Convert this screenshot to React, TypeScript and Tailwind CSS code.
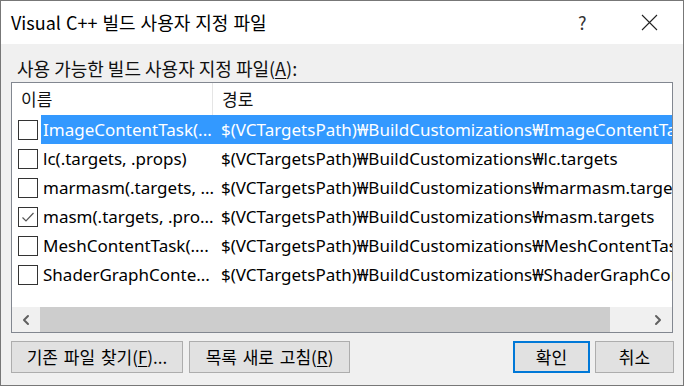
import { ChevronLeft, ChevronRight } from "lucide-react";

const rows = [
  { name: "ImageContentTask(...", path: "$(VCTargetsPath)₩BuildCustomizations₩ImageContentTask.targets", checked: false, selected: true },
  { name: "lc(.targets, .props)", path: "$(VCTargetsPath)₩BuildCustomizations₩lc.targets", checked: false },
  { name: "marmasm(.targets, ...", path: "$(VCTargetsPath)₩BuildCustomizations₩marmasm.targets", checked: false },
  { name: "masm(.targets, .pro...", path: "$(VCTargetsPath)₩BuildCustomizations₩masm.targets", checked: true },
  { name: "MeshContentTask(....", path: "$(VCTargetsPath)₩BuildCustomizations₩MeshContentTask.targets", checked: false },
  { name: "ShaderGraphConte...", path: "$(VCTargetsPath)₩BuildCustomizations₩ShaderGraphContentTask.targets", checked: false },
];

const ko = "font-['Noto_Sans_CJK_KR',sans-serif]";
const latin = "font-['Noto_Sans','Noto_Sans_CJK_KR',sans-serif]";

const CheckBox = ({ checked }: { checked: boolean }) => (
  <div className="flex h-[20px] w-[20px] shrink-0 items-center justify-center border border-[#333] bg-white">
    {checked && (
      <svg width="14" height="14" viewBox="0 0 14 14" fill="none">
        <path d="M1.5 7.5 L5 11 L12.5 3" stroke="#555" strokeWidth="1.2" />
      </svg>
    )}
  </div>
);

export default function App() {
  return (
    <div className={`flex h-[386px] w-[684px] flex-col overflow-hidden border border-[#777] bg-[#f0f0f0] ${ko}`}>
      {/* Title bar */}
      <div className="flex h-[43px] shrink-0 items-center bg-white pl-[10px] text-[18px] text-black">
        <span className="flex-1 [word-spacing:1px]">Visual C++ 빌드 사용자 지정 파일</span>
        <span className="w-[20px] text-[18px] text-[#333]">?</span>
        <span className="ml-[43px] mr-[25px] flex items-center">
          <svg width="17" height="17" viewBox="0 0 17 17">
            <path d="M1 1 L16 16 M16 1 L1 16" stroke="#222" strokeWidth="1.1" />
          </svg>
        </span>
      </div>

      <div className="flex flex-1 flex-col px-[10px]">
        <div className="mt-[11px] h-[27px] pl-[6px] text-[18px] leading-[27px] text-[#111]">
          사용 가능한 빌드 사용자 지정 파일(<span className="underline underline-offset-2">A</span>):
        </div>

        {/* List view */}
        <div className="flex h-[251px] w-[662px] flex-col border border-[#828790] bg-white">
          <div className="flex h-[32px] shrink-0 items-center text-[17px] text-[#111]">
            <div className="flex h-full w-[201px] items-center border-r border-[#e5e5e5] pl-[9px]">이름</div>
            <div className="pl-[9px]">경로</div>
          </div>
          <div className={`flex flex-1 flex-col ${latin} text-[17px]`}>
            {rows.map((r) => (
              <div key={r.name} className="flex h-[29px] items-center">
                <div className="flex w-[29px] shrink-0 justify-center pl-[2px]">
                  <CheckBox checked={r.checked} />
                </div>
                <div
                  className={`flex h-full min-w-0 flex-1 items-center overflow-hidden whitespace-nowrap ${
                    r.selected ? "bg-[#3399ff] text-white" : "text-black"
                  }`}
                >
                  <span className="w-[179px] shrink-0 overflow-hidden pl-[2px]">{r.name}</span>
                  <span className="shrink-0 pl-[1px]">{r.path}</span>
                </div>
              </div>
            ))}
          </div>
          {/* Horizontal scrollbar */}
          <div className="flex h-[25px] shrink-0 items-stretch bg-[#f0f0f0]">
            <div className="flex w-[28px] items-center justify-center text-[#606060]">
              <ChevronLeft size={16} strokeWidth={3} />
            </div>
            <div className="w-[570px] bg-[#cdcdcd]" />
            <div className="flex-1" />
            <div className="flex w-[28px] items-center justify-center text-[#606060]">
              <ChevronRight size={16} strokeWidth={3} />
            </div>
          </div>
        </div>

        {/* Buttons */}
        <div className="mt-[8px] flex h-[32px] items-stretch text-[17px] text-black">
          <button className="flex w-[172px] items-center justify-center border border-[#adadad] bg-[#e1e1e1] [word-spacing:2px]">
            기존 파일 찾기(<span className="underline underline-offset-2">F</span>)...
          </button>
          <button className="ml-[6px] flex w-[161px] items-center justify-center border border-[#adadad] bg-[#e1e1e1] [word-spacing:2px]">
            목록 새로 고침(<span className="underline underline-offset-2">R</span>)
          </button>
          <div className="flex-1" />
          <button className="flex w-[77px] items-center justify-center border-2 border-[#0078d7] bg-[#e1e1e1]">
            확인
          </button>
          <button className="ml-[5px] mr-[-1px] flex w-[79px] items-center justify-center border border-[#adadad] bg-[#e1e1e1]">
            취소
          </button>
        </div>
      </div>
    </div>
  );
}
